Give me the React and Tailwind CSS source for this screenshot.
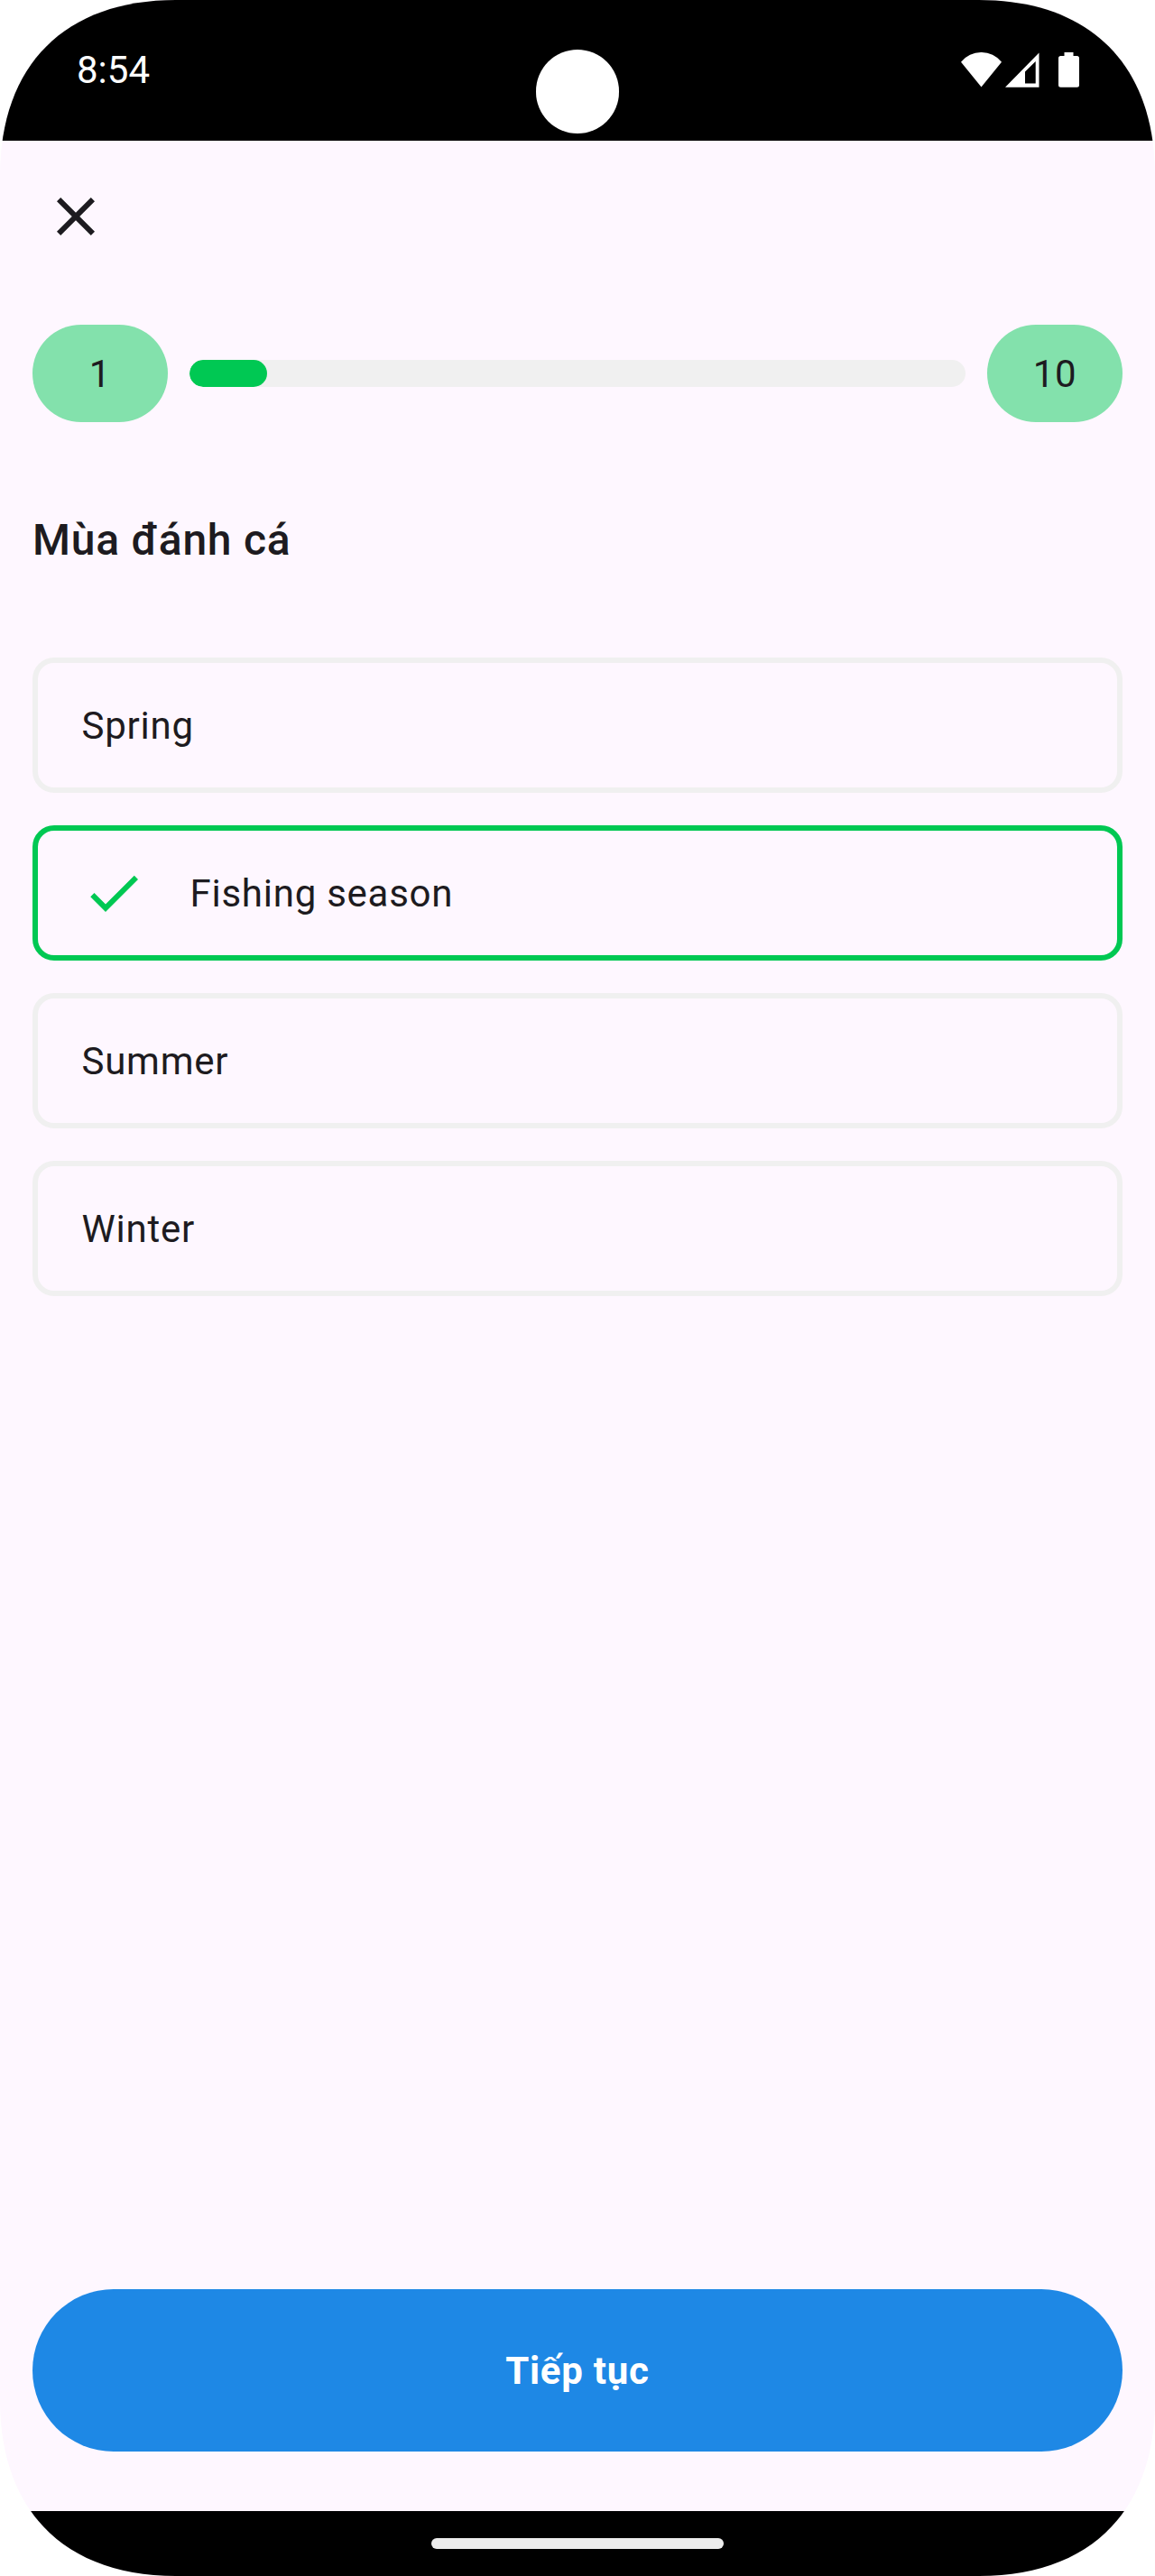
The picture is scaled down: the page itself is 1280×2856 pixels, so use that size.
const options = [
  { label: "Spring" },
  { label: "Fishing season", selected: true },
  { label: "Summer" },
  { label: "Winter" },
];

function StatusBar() {
  return (
    <header className="relative flex h-[156px] items-center justify-between bg-black pb-px pl-[85px] pr-[84px] text-white">
      <span className="pb-px text-[42px] leading-[49px]">8:54</span>
      <div className="absolute left-[594px] top-[55px] h-[93px] w-[92px] rounded-full bg-white" />
      <div className="flex h-[39px] items-center">
        <svg className="h-[39px] w-[45px]" viewBox="0 0 45 39" fill="white">
          <path d="M22.500 38.500 L0 10.700 A29 29 0 0 1 45 10.700 Z" />
        </svg>
        <svg className="ml-[4px] h-[39px] w-[38px]" viewBox="0 0 38 39" fill="white">
          <path fillRule="evenodd" d="M37.500 .500 V38.700 H0 Z M33.700 10 L22 21.500 V34.500 H33.700 Z" />
        </svg>
        <svg className="ml-[21px] h-[39px] w-[23px]" viewBox="0 0 23 39" fill="white">
          <path d="M6.500 0 H16.500 V4 H20.500 Q23 4 23 6.500 V36.200 Q23 38.700 20.500 38.700 H2.500 Q0 38.700 0 36.200 V6.500 Q0 4 2.500 4 H6.500 Z" />
        </svg>
      </div>
    </header>
  );
}

function StepPill({ children }) {
  return (
    <div className="flex h-[108px] w-[150px] items-center justify-center rounded-full bg-[#83e1ac] pt-[2px] text-[42px] leading-[60px] tracking-[0.75px]">
      {children}
    </div>
  );
}

function Option({ label, selected }) {
  return (
    <li
      className={
        "flex h-[150px] items-center rounded-[24px] border-[6px] px-[48px] text-[42px] leading-[60px] tracking-[0.75px] " +
        (selected ? "border-[#00c853]" : "border-[#f0f0f0]")
      }
    >
      {selected && (
        <svg className="mr-[48px] size-[72px]" viewBox="0 0 24 24" fill="#00c853">
          <path d="M9 16.170 4.830 12l-1.420 1.410L9 19 21 7l-1.410-1.410z" />
        </svg>
      )}
      <span className="pl-[0.5px] pt-[2px]">{label}</span>
    </li>
  );
}

export default function App() {
  return (
    <div className="h-[2856px] w-[1280px] bg-white">
      <div className="flex h-[2856px] flex-col bg-[#fef7ff] font-['Roboto',sans-serif] text-[#1d1b20] [clip-path:path('M0_195C0_72_72_0_195_0H1085C1208_0_1280_72_1280_195V2661C1280_2784_1208_2856_1085_2856H195C72_2856_0_2784_0_2661Z')]">
        <StatusBar />
        <main className="flex flex-1 flex-col px-9">
          <button className="ml-3 mt-12 size-[72px]" aria-label="Close">
            <svg className="size-[72px]" viewBox="0 0 24 24" fill="#1d1b20">
              <path d="M19 6.410 17.590 5 12 10.590 6.410 5 5 6.410 10.590 12 5 17.590 6.410 19 12 13.410 17.590 19 19 17.590 13.410 12z" />
            </svg>
          </button>
          <div className="mt-[84px] flex items-center gap-6">
            <StepPill>1</StepPill>
            <div className="h-[30px] flex-1 overflow-hidden rounded-full bg-[#f0f0f0]">
              <div className="h-full w-1/10 rounded-full bg-[#00c853]" />
            </div>
            <StepPill>10</StepPill>
          </div>
          <h1 className="mt-[95px] text-[48px] font-medium leading-[72px] tracking-[0.75px]">Mùa đánh cá</h1>
          <ul className="mt-[94px] flex flex-col gap-9">
            {options.map((o) => (
              <Option key={o.label} {...o} />
            ))}
          </ul>
          <button className="mb-[66px] mt-auto h-[180px] rounded-full bg-[#1e88e5] pt-[2px] text-[42px] font-bold leading-[60px] tracking-[0.75px] text-white">
            Tiếp tục
          </button>
        </main>
        <footer className="flex h-[72px] items-center justify-center bg-black">
          <div className="h-3 w-[324px] rounded-full bg-[#ececec]" />
        </footer>
      </div>
    </div>
  );
}
